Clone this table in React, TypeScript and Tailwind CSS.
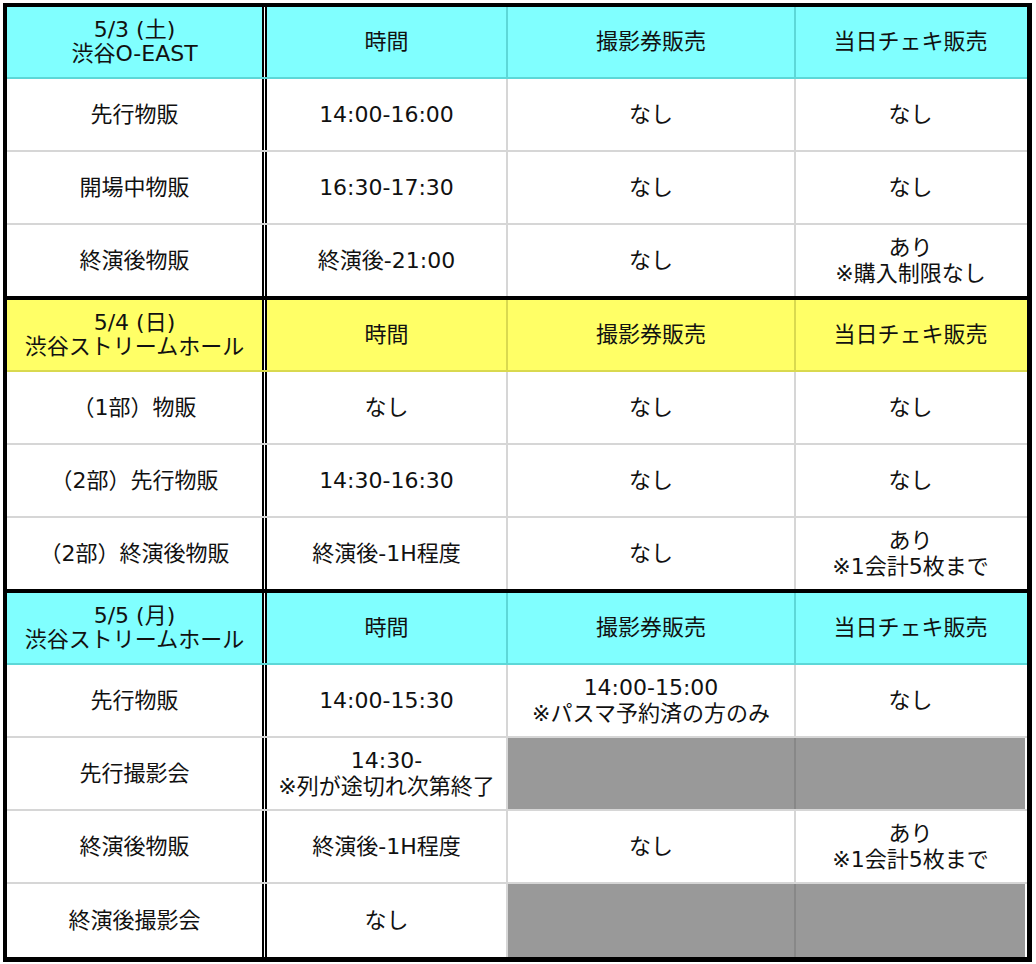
import type { ReactNode } from "react"

type Section = {
  title: [string, string]
  tone: "cyan" | "yellow"
  rows: (string | null)[][]
  lastTall?: boolean
}

const sections: Section[] = [
  {
    title: ["5/3 (土)", "渋谷O-EAST"],
    tone: "cyan",
    rows: [
      ["先行物販", "14:00-16:00", "なし", "なし"],
      ["開場中物販", "16:30-17:30", "なし", "なし"],
      ["終演後物販", "終演後-21:00", "なし", "あり\n※購入制限なし"],
    ],
  },
  {
    title: ["5/4 (日)", "渋谷ストリームホール"],
    tone: "yellow",
    rows: [
      ["（1部）物販", "なし", "なし", "なし"],
      ["（2部）先行物販", "14:30-16:30", "なし", "なし"],
      ["（2部）終演後物販", "終演後-1H程度", "なし", "あり\n※1会計5枚まで"],
    ],
  },
  {
    title: ["5/5 (月)", "渋谷ストリームホール"],
    tone: "cyan",
    lastTall: true,
    rows: [
      ["先行物販", "14:00-15:30", "14:00-15:00\n※パスマ予約済の方のみ", "なし"],
      ["先行撮影会", "14:30-\n※列が途切れ次第終了", null, null],
      ["終演後物販", "終演後-1H程度", "なし", "あり\n※1会計5枚まで"],
      ["終演後撮影会", "なし", null, null],
    ],
  },
]

function Text({ value }: { value: string }) {
  return (
    <>
      {value.split("\n").map((line) => (
        <span className="block" key={line}>
          {line}
        </span>
      ))}
    </>
  )
}

function DoubleRule() {
  return (
    <div className="flex w-[5px] shrink-0">
      <div className="w-[2px] bg-black" />
      <div className="w-[1px] bg-white" />
      <div className="w-[2px] bg-black" />
    </div>
  )
}

function Cell({
  width,
  className,
  children,
}: {
  width: string
  className: string
  children?: ReactNode
}) {
  return (
    <div
      className={`flex shrink-0 items-center justify-center text-center ${width} ${className}`}
    >
      <div>{children}</div>
    </div>
  )
}

function HeaderRow({ section }: { section: Section }) {
  const bg = section.tone === "cyan" ? "bg-[#80ffff]" : "bg-[#ffff66]"
  const line = section.tone === "cyan" ? "border-[#5dd8d8]" : "border-[#d9d94f]"
  return (
    <div className={`flex h-[72px] border-b-2 ${bg} ${line}`}>
      <Cell width="w-[255px]" className="leading-[24px]">
        <span className="block">{section.title[0]}</span>
        <span className="block">{section.title[1]}</span>
      </Cell>
      <DoubleRule />
      <Cell width="w-[241px]" className={`border-r-2 ${line}`}>
        時間
      </Cell>
      <Cell width="w-[288px]" className={`border-r-2 ${line}`}>
        撮影券販売
      </Cell>
      <Cell width="w-[229px]" className="">
        当日チェキ販売
      </Cell>
    </div>
  )
}

function DataRow({ cells, last, tall }: { cells: (string | null)[]; last: boolean; tall: boolean }) {
  const height = last ? (tall ? "h-[73px]" : "h-[71px]") : "h-[73px] border-b-2 border-[#d6d6d6]"
  const cellBg = (value: string | null) =>
    value === null ? "bg-[#999999] border-[#888888]" : "bg-white border-[#d6d6d6]"
  return (
    <div className={`flex ${height}`}>
      <Cell width="w-[255px]" className="bg-white">
        <Text value={cells[0] ?? ""} />
      </Cell>
      <DoubleRule />
      <Cell width="w-[241px]" className={`border-r-2 ${cellBg(cells[1])}`}>
        {cells[1] && <Text value={cells[1]} />}
      </Cell>
      <Cell
        width="w-[288px]"
        className={`border-r-2 ${cellBg(cells[2])} ${cells[2] === null && cells[3] === null ? "border-[#888888]" : ""}`}
      >
        {cells[2] && <Text value={cells[2]} />}
      </Cell>
      <Cell width="w-[229px]" className={cellBg(cells[3])}>
        {cells[3] && <Text value={cells[3]} />}
      </Cell>
    </div>
  )
}

export default function App() {
  return (
    <div
      className="min-h-screen bg-white p-[3px] text-[22px] leading-[26px] text-[#111]"
      style={{ fontFamily: '"DejaVu Sans", "Noto Sans CJK JP", sans-serif' }}
    >
      <div className="w-[1029px] border-[4px] border-r-[5px] border-b-[5px] border-black">
        {sections.map((section, i) => (
          <div className={i > 0 ? "border-t-4 border-black" : ""} key={section.title[0]}>
            <HeaderRow section={section} />
            {section.rows.map((cells, r) => (
              <DataRow
                cells={cells}
                key={cells[0]}
                last={r === section.rows.length - 1}
                tall={!!section.lastTall}
              />
            ))}
          </div>
        ))}
      </div>
    </div>
  )
}
